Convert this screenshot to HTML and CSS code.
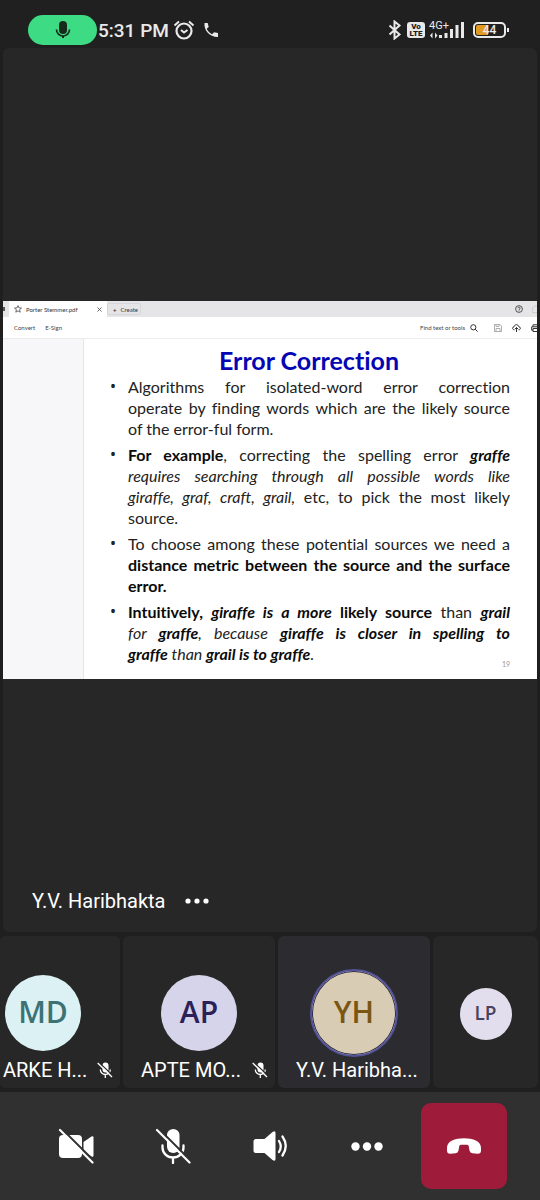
FILE: index.html
```html
<!DOCTYPE html>
<html lang="en">
<head>
<meta charset="utf-8">
<meta name="viewport" content="width=device-width, initial-scale=1">
<title>Meeting</title>
<link rel="stylesheet" href="styles.css">
</head>
<body>
<div class="app">
  <header class="status">
    <div class="mic-pill">
      <svg width="18" height="20" viewBox="0 0 18 20"><rect x="5" y="1" width="8" height="13" rx="4" fill="#152b1c"/><path d="M2.500 9.500a6.500 6.500 0 0 0 13 0" fill="none" stroke="#152b1c" stroke-width="1.700"/><path d="M9 16v2" stroke="#152b1c" stroke-width="2"/></svg>
    </div>
    <span class="time">5:31 PM</span>
    <svg class="alarm" width="22" height="20" viewBox="0 0 22 20" fill="none" stroke="#e9e9e9"><circle cx="11" cy="11" r="7.500" stroke-width="2.200"/><path d="M1.500 5.500 6 1.500M20.500 5.500 16 1.500" stroke-width="2"/><path d="M8 10l3 2.500L14.500 10" stroke-width="2"/></svg>
    <svg class="phone" width="16" height="16" viewBox="0 0 16 16"><path d="M1.500 1h3.200l1 4-2 1.700c1.200 2.400 2.900 4.200 5.500 5.500L11 10.200l4 .9V15C7 15.300.700 8.500 1.500 1z" fill="#e9e9e9"/></svg>
    <span class="spacer"></span>
    <svg class="bt" width="14" height="20" viewBox="0 0 14 20"><path d="M1.500 5.500l10 9-5 4v-17l5 4-10 9" fill="none" stroke="#e9e9e9" stroke-width="2"/></svg>
    <span class="volte"><span>Vo</span><span>LTE</span></span>
    <span class="signal">
      <span class="net">4G+</span>
      <svg width="36" height="18" viewBox="0 0 36 18" fill="#e9e9e9"><path d="M1 14.500l2.500-3v6zM8.500 14.500l-2.500-3v6z"/><rect x="10" y="14" width="3" height="3"/><rect x="15.500" y="12" width="3" height="5"/><rect x="21" y="8" width="3" height="9"/><rect x="26.500" y="4" width="3" height="13"/><rect x="32" y="1" width="3" height="16"/></svg>
    </span>
    <span class="battery"><span class="level">44</span></span>
  </header>

  <main class="stage">
    <section class="share">
      <div class="tabs">
        <span class="prev"></span>
        <div class="tab">
          <svg width="8" height="8" viewBox="0 0 8 8"><path d="M4 .6l1 2.300 2.500.2-1.900 1.600.6 2.500L4 5.900 1.800 7.200l.6-2.500L.5 3.100 3 2.900z" fill="none" stroke="#333" stroke-width=".7"/></svg>
          <span>Porter Stemmer.pdf</span>
          <svg class="close" width="5" height="5" viewBox="0 0 5 5"><path d="M.5.5l4 4m0-4l-4 4" stroke="#555" stroke-width=".9"/></svg>
        </div>
        <button class="create"><b>+</b>Create</button>
        <svg class="help" width="8" height="8" viewBox="0 0 8 8" fill="none" stroke="#444" stroke-width=".9"><circle cx="4" cy="4" r="3.400"/><path d="M2.900 3.200c0-1.500 2.300-1.400 2.200 0C5.100 4 4 4 4 5m0 .5v.7"/></svg>
        <svg width="6" height="9" viewBox="0 0 6 9"><path d="M1.500 5.500V4a3.500 3.500 0 0 1 4.500-3M.5 6.500C2 8 4 8 6 7.500" fill="none" stroke="#c8c8c8"/></svg>
      </div>
      <div class="tools">
        <span>Convert</span><span>E-Sign</span>
        <span class="find">Find text or tools</span>
        <svg class="i-search" width="8" height="8" viewBox="0 0 8 8"><circle cx="3.300" cy="3.300" r="2.600" fill="none" stroke="#333"/><path d="M5.200 5.200l2.400 2.400" stroke="#333"/></svg>
        <svg class="i-save" width="8" height="8" viewBox="0 0 8 8" fill="none" stroke="#999" stroke-width=".8"><path d="M.5.5h5.500l1.500 1.500v5.500h-7zM2 .5v2h3v-2M2 7.500v-3h4v3"/></svg>
        <svg class="i-cloud" width="9" height="8" viewBox="0 0 9 8" fill="none" stroke="#333"><path d="M2.500 5.800C0 5.800 0 3 2 2.800 2.500 0 6.300 0 6.900 2.800 9 3 9 5.800 6.500 5.800M4.500 8V3.500M3 5l1.500-1.500L6 5"/></svg>
        <svg class="i-print" width="6" height="8" viewBox="0 0 6 8" fill="none" stroke="#333"><path d="M6 .8H2v2M6 2.800H.700v3.400H2M2 4.500h4M2 4.500v3h4"/></svg>
      </div>
      <div class="doc">
        <div class="rail"></div>
        <article class="slide">
          <h1>Error Correction</h1>
          <ul>
            <li>
              <span class="line">Algorithms for isolated-word error correction</span>
              <span class="line">operate by finding words which are the likely source</span>
              <span class="line">of the error-ful form.</span>
            </li>
            <li>
              <span class="line"><b>For example</b>, correcting the spelling error <b><i>graffe</i></b></span>
              <span class="line"><i>requires searching through all possible words like</i></span>
              <span class="line"><i>giraffe, graf, craft, grail,</i> etc, to pick the most likely</span>
              <span class="line">source.</span>
            </li>
            <li>
              <span class="line">To choose among these potential sources we need a</span>
              <span class="line"><b>distance metric between the source and the surface</b></span>
              <span class="line"><b>error.</b></span>
            </li>
            <li>
              <span class="line"><b>Intuitively, <i>giraffe is a more</i> likely source</b> than <b><i>grail</i></b></span>
              <span class="line"><i>for <b>graffe</b>, because <b>giraffe is closer in spelling to</b></i></span>
              <span class="line"><i><b>graffe</b> than <b>grail is to graffe</b>.</i></span>
            </li>
          </ul>
          <span class="page">19</span>
        </article>
      </div>
    </section>
    <div class="presenter">
      <span>Y.V. Haribhakta</span>
      <button class="dots" aria-label="More options for Y.V. Haribhakta"><svg width="24" height="6" viewBox="0 0 24 6" fill="#fff"><circle cx="3" cy="3" r="2.600"/><circle cx="12" cy="3" r="2.600"/><circle cx="21" cy="3" r="2.600"/></svg></button>
    </div>
  </main>

  <section class="people">
    <div class="tile cut">
      <div class="avatar md">MD</div>
      <div class="name"><span>ARKE H...</span><svg class="muted" width="16" height="16" viewBox="0 0 16 16"><use href="#mic-off"/></svg></div>
    </div>
    <div class="tile">
      <div class="avatar ap">AP</div>
      <div class="name"><span>APTE MO...</span><svg class="muted" width="16" height="16" viewBox="0 0 16 16"><use href="#mic-off"/></svg></div>
    </div>
    <div class="tile speaking">
      <div class="avatar yh">YH</div>
      <div class="name"><span>Y.V. Haribha...</span></div>
    </div>
    <div class="tile self"><div class="avatar lp">LP</div></div>
  </section>

  <nav class="controls">
    <button aria-label="Turn camera on"><svg width="36" height="36" viewBox="0 0 36 36"><rect x="1" y="7" width="23" height="23" rx="4" fill="#fff"/><path d="M25.500 14l8-5.500q2-1 2 1v18q0 2-2 1l-8-5.500z" fill="#fff"/><path d="M3.500 .500L37.500 34.500" stroke="#303030" stroke-width="2"/><path d="M2 2l32.500 32.500" stroke="#fff" stroke-width="2.200" stroke-linecap="round"/></svg></button>
    <button aria-label="Unmute"><svg width="36" height="36" viewBox="0 0 36 36"><rect x="12" y="1" width="12.500" height="24" rx="6.200" fill="#fff"/><path d="M7.500 17.500v2a10.500 10 0 0 0 21 0v-2M18 29.500V35" fill="none" stroke="#fff" stroke-width="2.300" stroke-linecap="round"/><path d="M3.500 .500L37.500 34.500" stroke="#303030" stroke-width="2"/><path d="M2 2l32.500 32.500" stroke="#fff" stroke-width="2.200" stroke-linecap="round"/></svg></button>
    <button aria-label="Speaker"><svg width="36" height="36" viewBox="0 0 36 36"><path d="M4 11h8.500l8-7q3-2 3 1v26q0 3-3 1l-8-7H4q-2.500 0-2.500-2.500v-9Q1.500 11 4 11z" fill="#fff"/><path d="M27 13q3.500 5.500 0 11M30.500 8.500q6.500 9.500 0 19" fill="none" stroke="#fff" stroke-width="2.300" stroke-linecap="round"/></svg></button>
    <button aria-label="More"><svg width="36" height="36" viewBox="0 0 36 36" fill="#fff"><circle cx="6.500" cy="18.500" r="4.200"/><circle cx="18" cy="18.500" r="4.200"/><circle cx="29.500" cy="18.500" r="4.200"/></svg></button>
    <button class="hangup" aria-label="Hang up"><svg width="36" height="36" viewBox="0 0 36 36"><path d="M1 20C1 13 9 10.200 18 10.200S35 13 35 20v2.500q0 3.500-3.500 3.300l-5-.5q-2.500-.3-3-2.800l-.8-4.500q-.2-1-1.500-1.200h-6.400q-1.300.2-1.500 1.200l-.8 4.500q-.5 2.500-3 2.800l-5 .5Q1 26 1 22.500z" fill="#fff"/></svg></button>
  </nav>
</div>
<svg class="defs" width="0" height="0" aria-hidden="true">
  <symbol id="mic-off" viewBox="0 0 16 16"><rect x="5.500" y=".5" width="6" height="10" rx="3" fill="#fff"/><path d="M3.300 7.500a5 5 0 0 0 10 0M8.300 12.500V16" fill="none" stroke="#fff" stroke-width="1.300"/><path d="M1.500 0L16 13.500" stroke="#272727" stroke-width="1.200"/><path d="M.7 1L15 15" stroke="#fff" stroke-width="1.300"/></symbol>
</svg>
</body>
</html>
```

FILE: styles.css
```css
* { box-sizing: border-box; }
body { margin: 0; background: #1f1f1f; color: #fff; font-family: Roboto, sans-serif; }
svg { display: block; flex: none; }
button { border: 0; margin: 0; padding: 0; background: none; color: inherit; font: inherit; }
.defs { position: absolute; }
.app { display: flex; flex-direction: column; min-height: 100vh; }

.status { display: flex; align-items: center; height: 48px; padding: 12px 34px 0 28px; background: #202020; color: #e9e9e9; }
.mic-pill { display: flex; align-items: center; justify-content: center; width: 69px; height: 30px; border-radius: 15px; background: #3ddc84; }
.time { font-size: 19px; font-weight: 500; line-height: 24px; margin-left: 1px; padding-top: 2px; white-space: nowrap; }
.alarm { margin-left: 4px; }
.phone { margin-left: 8px; }
.spacer { flex: 1; }
.volte { display: flex; flex-direction: column; align-items: center; justify-content: center; width: 18px; height: 16px; margin-left: 5px; border-radius: 3px; background: #e9e9e9; color: #202020; font-size: 8px; font-weight: 900; line-height: 7px; }
.signal { display: grid; margin-left: 4px; }
.signal > * { grid-area: 1 / 1; }
.net { font-size: 11px; line-height: 10px; }
.signal svg { align-self: end; }
.battery { position: relative; display: flex; width: 33px; height: 16px; margin-left: 8px; padding: 1px; border: 2px solid #e9e9e9; border-radius: 5px; }
.battery::after { content: ""; position: absolute; right: -5px; top: 4px; width: 2px; height: 4px; background: #e9e9e9; }
.level { flex: 1; border-radius: 2px; background: linear-gradient(90deg, #e09a22 44%, transparent 44%); font-size: 12px; font-weight: 500; line-height: 11px; text-align: center; }

.stage { flex: 1; display: grid; grid-template-rows: 1fr auto 1fr; margin: 0 3px; border-radius: 6px; background: #272727; }
.share { grid-row: 2; background: #fff; color: #222; font-family: Lato, sans-serif; font-variant-ligatures: none; overflow: hidden; }
.tabs { display: flex; height: 16px; align-items: center; background: #e5e4e7; font-size: 6px; color: #333; }
.prev { width: 2px; height: 4px; background: #555; }
.tab { display: flex; align-items: center; align-self: stretch; gap: 4px; width: 98px; margin-left: 4px; padding: 0 5px; background: #fff; white-space: nowrap; }
.close { margin-left: auto; }
.create { display: flex; align-items: center; gap: 4px; height: 12px; padding: 0 2px 0 5px; border: 1px solid #d6d6d8; border-radius: 2px; }
.help { margin-left: auto; margin-right: 8px; }
.tools { display: flex; align-items: center; height: 22px; padding-left: 11px; gap: 10px; border-bottom: 1px solid #ececec; color: #444; font-size: 6px; white-space: nowrap; }
.find { margin-left: auto; margin-right: -5px; }
.i-search { margin-right: 6px; }
.doc { display: grid; grid-template-columns: 81px 1fr; }
.rail { background: #f7f6f9; border-right: 1px solid #e6e6e8; }
.slide { padding: 5px 27px 15px 44px; }
.slide h1 { margin: 0 20px 0 0; color: #0505b4; font-size: 25px; line-height: 32px; font-weight: 700; text-align: center; }
.slide ul { display: grid; gap: 5px; margin: 0; padding: 0; list-style: none; font-size: 16px; line-height: 21px; }
.slide li { position: relative; }
.slide li::before { content: "•"; position: absolute; left: -18px; font-family: "Noto Sans", sans-serif; }
.line { display: block; white-space: nowrap; text-align: justify; text-align-last: justify; }
.line:last-child { text-align-last: left; }
.slide b { color: #0b0b0b; }
.page { display: block; height: 0; line-height: 0; text-align: right; font-size: 7px; color: #999; }
.presenter { grid-row: 3; align-self: end; display: flex; align-items: center; gap: 20px; padding: 0 29px 19px; font-size: 20px; line-height: 24px; }

.people { display: grid; grid-template-columns: 120px 152px 152px 1fr; gap: 3px; height: 152px; margin: 4px 2px 4px 0; }
.tile { display: flex; flex-direction: column; align-items: center; padding-top: 39px; border-radius: 6px; background: #272727; overflow: hidden; }
.avatar { display: flex; align-items: center; justify-content: center; width: 76px; height: 76px; padding-bottom: 2px; border-radius: 50%; font: 600 30px/1 "Open Sans", sans-serif; }
.md { background: #dcf1f3; color: #3d7274; }
.ap { background: #d6d4ea; color: #2a2157; }
.yh { width: 88px; height: 88px; margin: -6px 0; border: 2px solid #53529a; background: #d8ccb5; color: #7b5512; box-shadow: inset 0 0 0 1px #2b2b42; }
.lp { width: 52px; height: 52px; padding: 0; background: #e3deee; color: #49415f; font-size: 19px; }
.name { display: flex; align-items: center; justify-content: space-between; align-self: stretch; padding: 0 7px 0 18px; margin-top: 7px; font-size: 20px; line-height: 24px; white-space: nowrap; }
.cut { align-items: flex-start; padding-left: 3px; }
.cut .avatar { margin-left: 2px; }
.cut .name { padding-left: 0; }
.speaking { background: #2b2b30; }
.self { justify-content: center; padding-top: 3px; }

.controls { display: grid; grid-template-columns: repeat(5, 1fr); align-items: center; height: 108px; padding: 0 28px 0 27px; background: #303030; }
.controls button { display: flex; align-items: center; justify-content: center; justify-self: center; width: 86px; height: 86px; border-radius: 10px; }
.controls .hangup { background: #9e1c39; }
```
